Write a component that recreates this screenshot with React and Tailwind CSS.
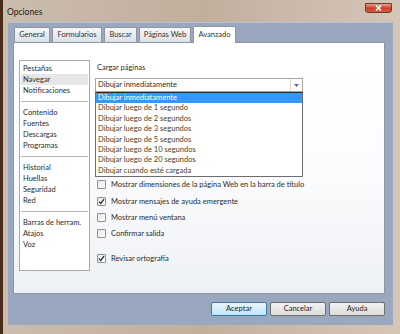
const categories = [
  ["Pestañas", "Navegar", "Notificaciones"],
  ["Contenido", "Fuentes", "Descargas", "Programas"],
  ["Historial", "Huellas", "Seguridad", "Red"],
  ["Barras de herram.", "Atajos", "Voz"],
];

const loadOptions = [
  "Dibujar inmediatamente",
  "Dibujar luego de 1 segundo",
  "Dibujar luego de 2 segundos",
  "Dibujar luego de 3 segundos",
  "Dibujar luego de 5 segundos",
  "Dibujar luego de 10 segundos",
  "Dibujar luego de 20 segundos",
  "Dibujar cuando esté cargada",
];

const tabs = [
  { label: "General", w: "w-[36px]" },
  { label: "Formularios", w: "w-[50px]" },
  { label: "Buscar", w: "w-[33px]" },
  { label: "Páginas Web", w: "w-[52px]" },
];

const Check = ({ checked, label, className = "" }) => (
  <div className={"flex items-center h-[11px] " + className}>
    <div className="w-[9px] h-[9px] ml-[2px] border border-[#8f8f8f] rounded-[1px] bg-gradient-to-br from-[#e6e6e6] to-white flex items-center justify-center">
      {checked && (
        <svg width="7" height="7" viewBox="0 0 7 7">
          <path d="M1 3.6 L2.8 5.4 L6 1.2" fill="none" stroke="#2b2b2b" strokeWidth="1.3" />
        </svg>
      )}
    </div>
    <span className="ml-[5px]">{label}</span>
  </div>
);

const App = () => {
  return (
    <div
      className="w-[400px] h-[334px] flex flex-col overflow-hidden text-[7.5px] text-[#2d2d2d] bg-gradient-to-r from-[#cbbcad] via-[#c2ae9d] to-[#d6c6b8] border-l-[3px] border-[#4a2c1a]"
      style={{ fontFamily: 'Lato, "Liberation Sans", sans-serif' }}
    >
      {/* Title bar */}
      <div className="h-[22px] flex justify-between pl-[4px] pr-[8px] shrink-0">
        <span className="text-[8.5px] text-[#1c1c1c] mt-[6px]">Opciones</span>
        <div className="w-[27px] h-[10px] mt-[3px] rounded-b-[3px] border border-[#6b3a2c] bg-gradient-to-b from-[#e8a090] via-[#c9402a] to-[#d85a3c] flex items-center justify-center">
          <svg width="7" height="6" viewBox="0 0 7 6">
            <path d="M1 0.5 L6 5.5 M6 0.5 L1 5.5" stroke="white" strokeWidth="1.6" />
          </svg>
        </div>
      </div>

      {/* Client area */}
      <div className="ml-[4px] w-[386px] h-[303px] bg-[#99a8bf] border-t border-l border-[#b7c3d4] flex flex-col pl-[5px]">
        {/* Tabs */}
        <div className="h-[19px] flex items-end gap-[2px] pl-[1px] pt-[3px]">
          {tabs.map((t) => (
            <div
              key={t.label}
              className={t.w + " h-[15px] border border-b-0 border-[#8e96a2] rounded-t-[2px] bg-gradient-to-b from-[#f6f6f6] to-[#dde0e4] flex items-center justify-center text-[#333]"}
            >
              {t.label}
            </div>
          ))}
          <div className="w-[43px] h-[17px] -mb-[1px] border border-b-0 border-[#8e96a2] rounded-t-[2px] bg-white flex items-center justify-center text-[#333] z-10">
            Avanzado
          </div>
        </div>

        {/* Panel */}
        <div className="w-[372px] h-[252px] border border-[#8e96a2] bg-gradient-to-b from-white via-[#fbfcfd] to-[#eef1f5] flex pl-[5px] pt-[17px]">
          {/* Category list */}
          <div className="w-[71px] h-[211px] border border-[#a9a9a9] bg-white pt-[2px] px-[1px]">
            {categories.map((group, gi) => (
              <div
                key={gi}
                className={gi < categories.length - 1 ? "pb-[5px] mb-[5px] border-b border-[#b4b4b4]" : ""}
              >
                {group.map((c) => (
                  <div
                    key={c}
                    className={"h-[11px] leading-[11px] pl-[2px] " + (c === "Navegar" ? "bg-[#e6e6e6]" : "")}
                  >
                    {c}
                  </div>
                ))}
              </div>
            ))}
          </div>

          {/* Right side */}
          <div className="ml-[5px] flex flex-col">
            <div className="h-[12px] leading-[12px] mt-[2px] pl-[2px]">Cargar páginas</div>
            <div className="mt-[4px] w-[208px] h-[14px] border border-[#a5a5a5] bg-white flex items-center">
              <span className="flex-1 pl-[2px]">Dibujar inmediatamente</span>
              <div className="w-[12px] h-full border-l border-[#d6d6d6] flex items-center justify-center">
                <svg width="5" height="3" viewBox="0 0 5 3">
                  <path d="M0 0 H5 L2.5 3 Z" fill="#4f6c9b" />
                </svg>
              </div>
            </div>
            <div className="w-[208px] border border-[#6e6e6e] border-t-[#2a2a2a] bg-white">
              {loadOptions.map((o, i) => (
                <div
                  key={o}
                  className={"h-[10.4px] leading-[10.4px] pl-[2px] " + (i === 0 ? "bg-[#3399ff] text-white" : "text-[#4a4226]")}
                >
                  {o}
                </div>
              ))}
            </div>

            <Check className="mt-[2px]" label="Mostrar dimensiones de la página Web en la barra de título" />
            <Check className="mt-[6px]" checked label="Mostrar mensajes de ayuda emergente" />
            <Check className="mt-[5px]" label="Mostrar menú ventana" />
            <Check className="mt-[5px]" label="Confirmar salida" />
            <Check className="mt-[14px]" checked label="Revisar ortografía" />
          </div>
        </div>

        {/* Buttons */}
        <div className="w-[372px] flex justify-end gap-[3px] mt-[8px]">
          <button className="w-[56px] h-[14px] rounded-[2px] border border-[#3d7bad] bg-gradient-to-b from-[#eaf6fd] to-[#bee6fd] text-[#1e1e1e] text-[7.5px]">
            Aceptar
          </button>
          <button className="w-[56px] h-[14px] rounded-[2px] border border-[#707070] bg-gradient-to-b from-[#f2f2f2] to-[#dcdcdc] text-[#1e1e1e] text-[7.5px]">
            Cancelar
          </button>
          <button className="w-[56px] h-[14px] rounded-[2px] border border-[#707070] bg-gradient-to-b from-[#f2f2f2] to-[#dcdcdc] text-[#1e1e1e] text-[7.5px]">
            Ayuda
          </button>
        </div>
      </div>
    </div>
  );
};

export default App;
